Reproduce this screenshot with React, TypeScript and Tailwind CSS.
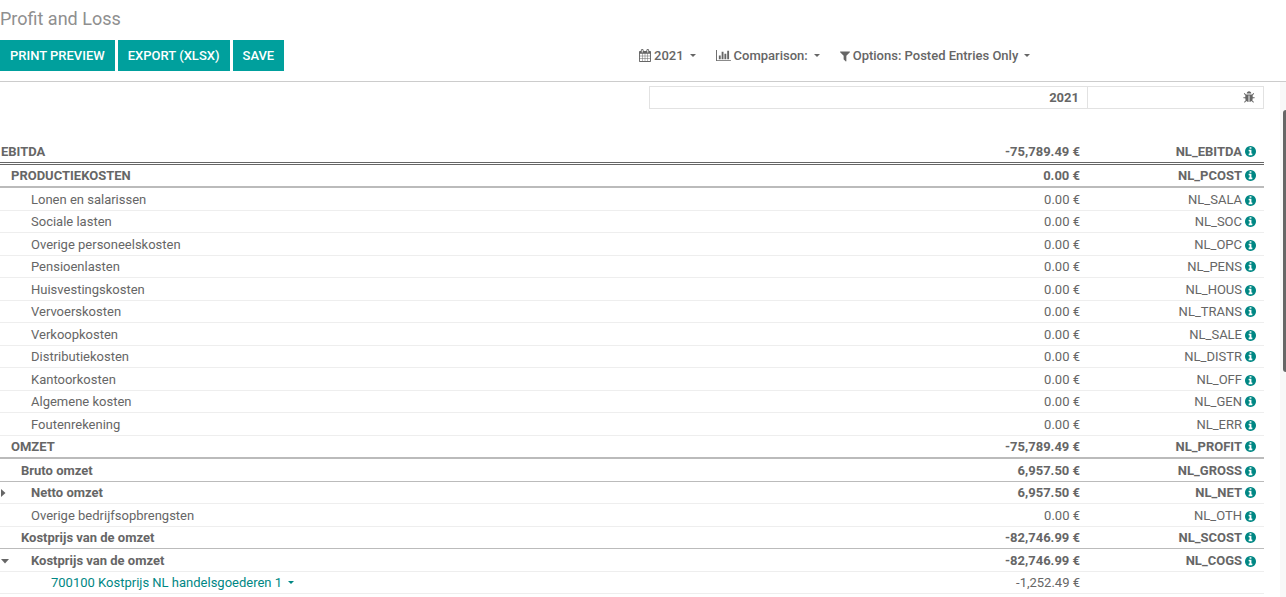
import type { ReactNode } from 'react'

interface Line {
  name: string
  amount: string
  code?: string
  level: number
  fold?: 'open' | 'closed'
}

const LINES: Line[] = [
  { name: 'EBITDA', amount: '-75,789.49 €', code: 'NL_EBITDA', level: 0 },
  { name: 'PRODUCTIEKOSTEN', amount: '0.00 €', code: 'NL_PCOST', level: 1 },
  { name: 'Lonen en salarissen', amount: '0.00 €', code: 'NL_SALA', level: 4 },
  { name: 'Sociale lasten', amount: '0.00 €', code: 'NL_SOC', level: 4 },
  { name: 'Overige personeelskosten', amount: '0.00 €', code: 'NL_OPC', level: 4 },
  { name: 'Pensioenlasten', amount: '0.00 €', code: 'NL_PENS', level: 4 },
  { name: 'Huisvestingskosten', amount: '0.00 €', code: 'NL_HOUS', level: 4 },
  { name: 'Vervoerskosten', amount: '0.00 €', code: 'NL_TRANS', level: 4 },
  { name: 'Verkoopkosten', amount: '0.00 €', code: 'NL_SALE', level: 4 },
  { name: 'Distributiekosten', amount: '0.00 €', code: 'NL_DISTR', level: 4 },
  { name: 'Kantoorkosten', amount: '0.00 €', code: 'NL_OFF', level: 4 },
  { name: 'Algemene kosten', amount: '0.00 €', code: 'NL_GEN', level: 4 },
  { name: 'Foutenrekening', amount: '0.00 €', code: 'NL_ERR', level: 4 },
  { name: 'OMZET', amount: '-75,789.49 €', code: 'NL_PROFIT', level: 1 },
  { name: 'Bruto omzet', amount: '6,957.50 €', code: 'NL_GROSS', level: 2 },
  { name: 'Netto omzet', amount: '6,957.50 €', code: 'NL_NET', level: 3, fold: 'closed' },
  { name: 'Overige bedrijfsopbrengsten', amount: '0.00 €', code: 'NL_OTH', level: 4 },
  { name: 'Kostprijs van de omzet', amount: '-82,746.99 €', code: 'NL_SCOST', level: 2 },
  { name: 'Kostprijs van de omzet', amount: '-82,746.99 €', code: 'NL_COGS', level: 3, fold: 'open' },
  { name: '700100 Kostprijs NL handelsgoederen 1', amount: '-1,252.49 €', level: 5 },
]

const ROW_STYLE = [
  'h-6 font-bold *:border-b-3 *:border-double *:border-[#666666]',
  'h-[23px] font-bold *:border-b-2 *:border-[#bbbbbb]',
  'odd:h-[23px] even:h-[22px] odd:*:align-bottom font-bold *:border-b *:border-[#bbbbbb]',
  'odd:h-[23px] even:h-[22px] odd:*:align-bottom font-bold *:border-b *:border-[#eeeeee]',
  'odd:h-[23px] even:h-[22px] odd:*:align-bottom font-normal *:border-b *:border-[#eeeeee]',
  'odd:h-[23px] even:h-[22px] odd:*:align-bottom font-normal *:border-b *:border-[#eeeeee]',
]

const INDENT = ['pl-px', 'pl-[11px]', 'pl-[21px]', 'pl-[31px]', 'pl-[31px]', 'pl-[51px]']

const CALENDAR =
  'M128 1664h288v-288H128v288zm352 0h320v-288H480v288zM128 1312h288V992H128v320zm352 0h320V992H480v320zM128 928h288V640H128v288zm736 736h320v-288H864v288zM480 928h320V640H480v288zm768 736h288v-288h-288v288zM864 1312h320V992H864v320zM512 448V160q0-13-9.500-22.500T480 128h-64q-13 0-22.500 9.500T384 160v288q0 13 9.500 22.500T416 480h64q13 0 22.500-9.500T512 448zm736 864h288V992h-288v320zM864 928h320V640H864v288zm384 0h288V640h-288v288zm32-480V160q0-13-9.500-22.500T1248 128h-64q-13 0-22.500 9.500T1152 160v288q0 13 9.500 22.500t22.500 9.500h64q13 0 22.500-9.500t9.500-22.500zm384-64v1280q0 52-38 90t-90 38H128q-52 0-90-38t-38-90V384q0-52 38-90t90-38h128v-96q0-66 47-113T416 0h64q66 0 113 47t47 113v96h384v-96q0-66 47-113t113-47h64q66 0 113 47t47 113v96h128q52 0 90 38t38 90z'
const BAR_CHART =
  'M640 896v512H384V896h256zm384-512v1024H768V384h256zm1024 1152v128H0V128h128v1408h1920zm-640-896v768h-256V640h256zm384-384v1152h-256V256h256z'
const FILTER =
  'M1403 295q17 41-14 70L896 858v742q0 42-39 59-13 5-25 5-27 0-45-19l-256-256q-19-19-19-45V858L19 365q-31-29-14-70 17-39 59-39h1280q42 0 59 39z'
const BUG =
  'M1632 928q0 26-19 45t-45 19h-224q0 171-67 290l208 209q19 19 19 45t-19 45q-18 19-45 19t-45-19l-198-197q-5 5-15 13t-42 28.500-65 36.500-82 29-97 13V608H768v896q-51 0-101.500-13.500t-87-33-66-39-43.500-32.500l-15-14-183 207q-20 21-48 21-24 0-43-16-19-18-20.500-44.500T176 1492l202-227q-58-114-58-273H96q-26 0-45-19t-19-45 19-45 45-19h224V570L147 397q-19-19-19-45t19-45 45-19 45 19l173 173h844l173-173q19-19 45-19t45 19 19 45-19 45l-173 173v294h224q26 0 45 19t19 45zM1152 352H512q0-133 93.500-226.500T832 32t226.500 93.500T1152 352z'
const INFO =
  'M1024 1376v-160q0-14-9-23t-23-9h-96V672q0-14-9-23t-23-9H544q-14 0-23 9t-9 23v160q0 14 9 23t23 9h96v320h-96q-14 0-23 9t-9 23v160q0 14 9 23t23 9h448q14 0 23-9t9-23zM896 480V320q0-14-9-23t-23-9H672q-14 0-23 9t-9 23v160q0 14 9 23t23 9h192q14 0 23-9t9-23zM1536 896q0 209-103 385.500T1153.500 1561 768 1664t-385.500-103T103 1281.500 0 896t103-385.500T382.500 231 768 128t385.500 103T1433 510.500 1536 896z'

function Icon({ path, width, className }: { path: string; width: number; className: string }) {
  return (
    <svg viewBox={`0 0 ${width} 1792`} className={`shrink-0 fill-current ${className}`} aria-hidden="true">
      <path d={path} />
    </svg>
  )
}

function Caret({ className }: { className: string }) {
  return (
    <svg viewBox="0 0 6 3" className={`h-[3px] w-1.5 shrink-0 fill-current ${className}`} aria-hidden="true">
      <path d="M0 0h6L3 3z" />
    </svg>
  )
}

function ActionButton({ children }: { children: ReactNode }) {
  return (
    <button className="h-[31px] bg-[#00a09d] px-2.5 font-medium whitespace-nowrap text-white uppercase">
      {children}
    </button>
  )
}

function FilterButton({ icon, label }: { icon: ReactNode; label: string }) {
  return (
    <button className="flex items-center whitespace-nowrap font-medium">
      {icon}
      <span className="ml-[3px]">{label}</span>
      <Caret className="ml-1.5" />
    </button>
  )
}

function ReportRow({ line }: { line: Line }) {
  return (
    <tr className={ROW_STYLE[line.level]}>
      <td className={INDENT[line.level]}>
        <div className="flex items-center">
          {/* Fold arrow sits in the gutter left of the indented name */}
          {line.fold && (
            <button className="-ml-[31px] w-[31px] pl-px" aria-label="Toggle line">
              {line.fold === 'closed' ? (
                <svg viewBox="0 0 5 8" className="h-2 w-[5px] fill-current">
                  <path d="M0 0v8L4.500 4z" />
                </svg>
              ) : (
                <svg viewBox="0 0 8 5" className="h-[5px] w-2 fill-current">
                  <path d="M0 0h8L4 4.500z" />
                </svg>
              )}
            </button>
          )}
          {line.level === 5 ? (
            <a href="#" className="flex items-center text-[#008784]">
              {line.name}
              <Caret className="ml-1.5" />
            </a>
          ) : (
            line.name
          )}
        </div>
      </td>
      <td className="pr-2 text-right">{line.amount}</td>
      <td className="pr-2">
        {line.code && (
          <div className="flex items-center justify-end gap-[3px]">
            {line.code}
            <Icon path={INFO} width={1536} className="h-[13px] w-[11px] text-[#008784]" />
          </div>
        )}
      </td>
    </tr>
  )
}

export default function App() {
  return (
    <div className="flex h-screen flex-col overflow-hidden bg-white font-['Roboto',sans-serif] text-[13px] leading-5 text-[#666666]">
      <header className="border-b border-[#cccccc] pt-1.5 pb-2.5">
        <h1 className="mb-2 text-lg leading-[26px] text-[#8f8f8f]">Profit and Loss</h1>
        <div className="grid grid-cols-[639fr_647fr] items-center">
          <div className="flex gap-[3px]">
            <ActionButton>Print Preview</ActionButton>
            <ActionButton>Export (XLSX)</ActionButton>
            <ActionButton>Save</ActionButton>
          </div>
          <div className="flex items-center gap-5">
            <FilterButton icon={<Icon path={CALENDAR} width={1664} className="h-[13px] w-3" />} label="2021" />
            <FilterButton icon={<Icon path={BAR_CHART} width={2048} className="h-[13px] w-[15px]" />} label="Comparison:" />
            <FilterButton icon={<Icon path={FILTER} width={1408} className="h-3.5 w-2.5" />} label="Options: Posted Entries Only" />
          </div>
        </div>
      </header>

      <div className="flex min-h-0 flex-1">
        <main className="min-w-0 flex-1 pt-1 pr-4">
          <table className="w-full table-fixed border-separate border-spacing-0">
            <colgroup>
              <col />
              <col className="w-[439px]" />
              <col className="w-44" />
            </colgroup>
            <thead>
              <tr className="h-[23px]">
                <td />
                <th className="border border-[#e2e2e2] pr-2 text-right font-bold">2021</th>
                <th className="border-y border-r border-[#e2e2e2] pr-2">
                  <div className="flex justify-end">
                    <Icon path={BUG} width={1664} className="h-[13px] w-3" />
                  </div>
                </th>
              </tr>
              <tr className="h-8">
                <td colSpan={3} />
              </tr>
            </thead>
            <tbody>
              {LINES.map((line, i) => (
                <ReportRow key={i} line={line} />
              ))}
            </tbody>
          </table>
        </main>

        {/* Scroll track */}
        <div className="flex w-1.5 justify-end bg-[#f8f8f8] pt-7">
          <div className="h-[262px] w-[3px] rounded-l-sm bg-[#666666]" />
        </div>
      </div>
    </div>
  )
}
